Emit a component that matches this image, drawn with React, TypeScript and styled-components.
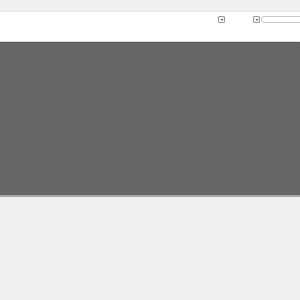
import styled, { createGlobalStyle } from "styled-components";

const GlobalStyle = createGlobalStyle`
  html, body {
    margin: 0;
    padding: 0;
    background: #f0f0f0;
    font-family: "Liberation Sans", Arial, sans-serif;
    overflow: hidden;
  }
`;

const Page = styled.div`
  width: 300px;
  height: 300px;
  display: flex;
  flex-direction: column;
  padding-top: 11px;
  box-sizing: border-box;
`;

const Toolbar = styled.header`
  height: 31px;
  flex-shrink: 0;
  background: #ffffff;
  border-top: 1px solid #e6e6e6;
  border-bottom: 1px solid #dcdcdc;
  display: flex;
  align-items: flex-start;
  justify-content: flex-end;
  padding-top: 4px;
  box-sizing: border-box;
  overflow: hidden;
`;

const Group = styled.div<{ $gap?: number }>`
  display: flex;
  align-items: center;
  gap: ${(p) => p.$gap ?? 1}px;
  margin-left: 28px;
`;

const Dropdown = styled.div`
  width: 7px;
  height: 7px;
  border: 1px solid #9a9a9a;
  border-radius: 1px;
  background: #f6f6f6;
  box-sizing: border-box;
  display: flex;
  align-items: center;
  justify-content: center;

  &::after {
    content: "";
    border-left: 1.5px solid transparent;
    border-right: 1.5px solid transparent;
    border-top: 2px solid #333;
  }
`;

const Search = styled.input`
  width: 48px;
  height: 7px;
  box-sizing: border-box;
  margin-right: -9px;
  border: 1px solid #c8c8c8;
  border-radius: 3px;
  padding: 0;
  background: #fff;
  outline: none;
`;

const Canvas = styled.main`
  height: 155px;
  flex-shrink: 0;
  background-color: #666666;
  background-image: repeating-conic-gradient(#616161 0 25%, #6b6b6b 0 50%);
  background-size: 2px 2px;
  border-top: 1px solid #5a5a5a;
  border-bottom: 2px solid #a8a8a8;
  box-sizing: border-box;
`;

export default function App() {
  return (
    <Page>
      <GlobalStyle />
      <Toolbar>
        <Group>
          <Dropdown />
        </Group>
        <Group>
          <Dropdown />
          <Search type="text" />
        </Group>
      </Toolbar>
      <Canvas />
    </Page>
  );
}
